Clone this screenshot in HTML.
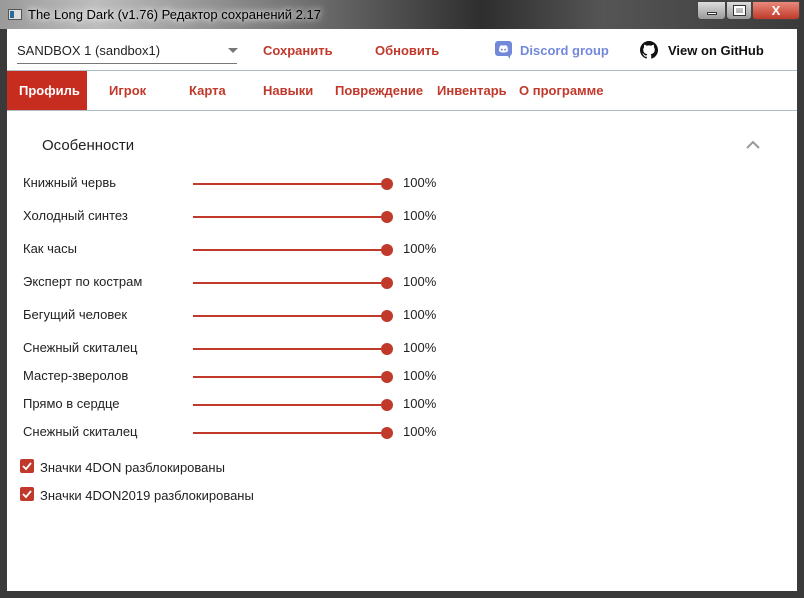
<!DOCTYPE html>
<html><head><meta charset="utf-8"><style>
*{margin:0;padding:0;box-sizing:border-box}
body{width:804px;height:598px;overflow:hidden;font-family:"Liberation Sans",sans-serif;background:#3a3a3a;position:relative}
.tb{position:absolute;left:0;top:0;width:804px;height:29px;background:linear-gradient(90deg,#9a9a9a 0%,#bdbdbd 12%,#6a6a6a 40%,#2e2e2e 60%,#555 75%,#3a3a3a 100%)}
.title{position:absolute;left:28px;top:7px;font-size:13px;color:#000;text-shadow:0 0 6px #fff,0 0 10px #fff}
.ic{position:absolute;left:8px;top:9px;width:14px;height:11px;background:#ddd;border:1px solid #555}
.ic:before{content:"";position:absolute;left:1px;top:1px;width:4px;height:7px;background:#2a6a9a}
.wb{position:absolute;top:1px;height:19px;border:1px solid #444;border-radius:0 0 4px 4px}
.c{position:absolute;left:7px;top:29px;width:790px;height:562px;background:#fff}
.a{position:absolute;white-space:nowrap}
.red{color:#c0392b;font-weight:bold;font-size:13px}
.tab{color:#c0392b;font-weight:bold;font-size:13px;top:83px}
.lbl{font-size:13px;color:#222;left:23px}
.tr{position:absolute;left:193px;width:194px;height:2px;background:#c0392b}
.th{position:absolute;left:381px;width:12px;height:12px;border-radius:50%;background:#c0392b}
.pct{font-size:13px;color:#222;left:403px}
.cb{position:absolute;left:20px;width:14px;height:14px;background:#c0392b;border-radius:2px}
</style></head><body>
<div class="tb"></div>
<div class="ic"></div>
<div class="title">The Long Dark (v1.76) Редактор сохранений 2.17</div>
<div class="wb" style="left:697px;width:29px;background:linear-gradient(#ddd,#999)"><div style="position:absolute;left:9px;top:10px;width:10px;height:3px;background:#fff;border:1px solid #333"></div></div>
<div class="wb" style="left:726px;width:26px;background:linear-gradient(#ddd,#999)"><div style="position:absolute;left:7px;top:4px;width:11px;height:9px;border:2px solid #fff;outline:1px solid #333"></div></div>
<div class="wb" style="left:752px;width:48px;background:linear-gradient(#e88a7a,#c0392b);color:#fff;font-weight:bold;text-align:center;font-size:13px;line-height:17px">X</div>
<div class="c"></div>
<div class="a" style="left:17px;top:43px;font-size:13px;color:#222">SANDBOX 1 (sandbox1)</div>
<div class="a" style="left:228px;top:48px;width:0;height:0;border-left:5px solid transparent;border-right:5px solid transparent;border-top:5px solid #777"></div>
<div class="a" style="left:17px;top:63px;width:220px;height:1px;background:#777"></div>
<div class="a red" style="left:263px;top:43px">Сохранить</div>
<div class="a red" style="left:375px;top:43px">Обновить</div>
<svg class="a" style="left:495px;top:41px" width="17" height="18" viewBox="0 0 17 18"><rect x="0" y="0" width="17" height="15" rx="3" fill="#7289da"/><path d="M12 14 L15 18 L15 13Z" fill="#7289da"/><path d="M4 10c1 1 2 1.5 4.5 1.5S12 11 13 10c0-3-1-5-1-5-1-.7-2-.9-2-.9l-.3.5c-1-.2-1.5-.2-2.4 0L7 4.1s-1 .2-2 .9c0 0-1 2-1 5z" fill="#fff"/><circle cx="6.8" cy="8.6" r="1" fill="#7289da"/><circle cx="10.2" cy="8.6" r="1" fill="#7289da"/></svg>
<div class="a" style="left:520px;top:43px;font-size:13px;font-weight:bold;color:#7289da">Discord group</div>
<svg class="a" style="left:640px;top:41px" width="18" height="18" viewBox="0 0 16 16"><path fill="#111" d="M8 0C3.58 0 0 3.58 0 8c0 3.54 2.290 6.53 5.47 7.59.4.07.55-.17.55-.38v-1.33c-2.23.48-2.7-1.07-2.7-1.070-.36-.93-.89-1.17-.89-1.17-.73-.5.05-.49.05-.49.8.06 1.23.83 1.23.83.72 1.22 1.87.87 2.33.66.07-.52.28-.87.5-1.07-1.78-.2-3.64-.89-3.64-3.95 0-.87.31-1.59.82-2.15-.08-.2-.36-1.02.08-2.12 0 0 .67-.21 2.2.82a7.6 7.6 0 014 0c1.53-1.04 2.2-.82 2.2-.82.44 1.1.16 1.92.08 2.12.51.56.82 1.27.82 2.150 0 3.07-1.87 3.75-3.65 3.95.29.25.54.73.54 1.48v2.2c0 .21.15.46.55.38A8.01 8.01 0 0016 8c0-4.42-3.58-8-8-8z"/></svg>
<div class="a" style="left:668px;top:43px;font-size:13px;font-weight:bold;color:#111">View on GitHub</div>
<div class="a" style="left:7px;top:70px;width:790px;height:1px;background:#b0bcc8"></div>
<div class="a" style="left:7px;top:71px;width:80px;height:39px;background:#c62d1f"></div>
<div class="a tab" style="left:19px;color:#fff">Профиль</div>
<div class="a tab" style="left:109px">Игрок</div>
<div class="a tab" style="left:189px">Карта</div>
<div class="a tab" style="left:263px">Навыки</div>
<div class="a tab" style="left:335px">Повреждение</div>
<div class="a tab" style="left:437px">Инвентарь</div>
<div class="a tab" style="left:519px">О программе</div>
<div class="a" style="left:7px;top:110px;width:790px;height:1px;background:#b0bcc8"></div>
<div class="a" style="left:42px;top:137px;font-size:15px;color:#222">Особенности</div>
<svg class="a" style="left:746px;top:140px" width="14" height="9"><path d="M1 8L7 2L13 8" stroke="#999" stroke-width="2" fill="none"/></svg>

<div class="a lbl" style="top:175px">Книжный червь</div><div class="tr" style="top:183px"></div><div class="th" style="top:178px"></div><div class="a pct" style="top:175px">100%</div>
<div class="a lbl" style="top:208px">Холодный синтез</div><div class="tr" style="top:216px"></div><div class="th" style="top:211px"></div><div class="a pct" style="top:208px">100%</div>
<div class="a lbl" style="top:241px">Как часы</div><div class="tr" style="top:249px"></div><div class="th" style="top:244px"></div><div class="a pct" style="top:241px">100%</div>
<div class="a lbl" style="top:274px">Эксперт по кострам</div><div class="tr" style="top:282px"></div><div class="th" style="top:277px"></div><div class="a pct" style="top:274px">100%</div>
<div class="a lbl" style="top:307px">Бегущий человек</div><div class="tr" style="top:315px"></div><div class="th" style="top:310px"></div><div class="a pct" style="top:307px">100%</div>
<div class="a lbl" style="top:340px">Снежный скиталец</div><div class="tr" style="top:348px"></div><div class="th" style="top:343px"></div><div class="a pct" style="top:340px">100%</div>
<div class="a lbl" style="top:368px">Мастер-зверолов</div><div class="tr" style="top:376px"></div><div class="th" style="top:371px"></div><div class="a pct" style="top:368px">100%</div>
<div class="a lbl" style="top:396px">Прямо в сердце</div><div class="tr" style="top:404px"></div><div class="th" style="top:399px"></div><div class="a pct" style="top:396px">100%</div>
<div class="a lbl" style="top:424px">Снежный скиталец</div><div class="tr" style="top:432px"></div><div class="th" style="top:427px"></div><div class="a pct" style="top:424px">100%</div>

<div class="cb" style="top:459px"><svg width="14" height="14"><path d="M3 7l3 3 5-6" stroke="#fff" stroke-width="1.8" fill="none"/></svg></div>
<div class="a" style="left:40px;top:460px;font-size:13px;color:#222">Значки 4DON разблокированы</div>
<div class="cb" style="top:487px"><svg width="14" height="14"><path d="M3 7l3 3 5-6" stroke="#fff" stroke-width="1.8" fill="none"/></svg></div>
<div class="a" style="left:40px;top:488px;font-size:13px;color:#222">Значки 4DON2019 разблокированы</div>
</body></html>
